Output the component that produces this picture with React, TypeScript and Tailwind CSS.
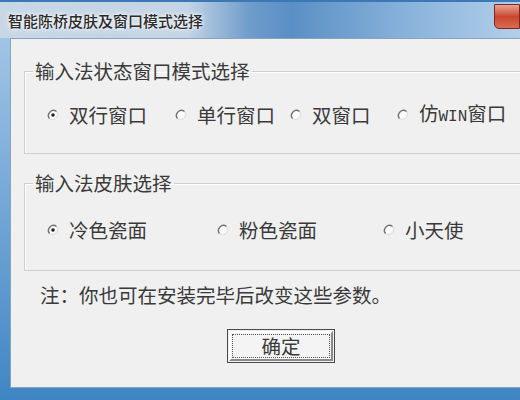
import React from "react";

const modes = [
  { label: "双行窗口", width: "w-[128px]", checked: true },
  { label: "单行窗口", width: "w-[115px]", checked: false },
  { label: "双窗口", width: "w-[107px]", checked: false },
  { label: "仿WIN窗口", width: "w-auto", checked: false },
];

const skins = [
  { label: "冷色瓷面", width: "w-[170px]", checked: true },
  { label: "粉色瓷面", width: "w-[166px]", checked: false },
  { label: "小天使", width: "w-auto", checked: false },
];

function Radio({ checked }: { checked: boolean }) {
  return (
    <svg width="12" height="12" viewBox="0 0 12 12" className="shrink-0">
      <circle cx="6" cy="6" r="5" fill="#fbfbfb" />
      {/* light lower-right half */}
      <path d="M9.5 2.5 A5 5 0 0 1 2.5 9.5" fill="none" stroke="#e2e2e2" strokeWidth="1.3" />
      {/* dark upper-left half */}
      <path d="M2.5 9.5 A5 5 0 0 1 9.5 2.5" fill="none" stroke="#707070" strokeWidth="1.4" />
      {checked && <circle cx="6" cy="6" r="1.8" fill="#222" />}
    </svg>
  );
}

function Label({ text }: { text: string }) {
  // the latin part of 仿WIN窗口 is drawn in a narrow fixed-width face
  if (text.includes("WIN")) {
    const [a, b] = text.split("WIN");
    return (
      <span>
        {a}
        <span className="font-['Liberation_Mono',monospace] text-[16px]">WIN</span>
        {b}
      </span>
    );
  }
  return <span>{text}</span>;
}

export default function App() {
  return (
    <div className="relative h-[400px] w-[520px] overflow-hidden border-t-[2px] border-[#3b78b5] bg-gradient-to-b from-[#a9cbe8] via-[#74a8d6] to-[#3f86c4] font-['Noto_Sans_CJK_SC',sans-serif] text-[#3a3a3a]">
      {/* title bar */}
      <div className="flex h-[36px] items-center bg-[linear-gradient(90deg,#c8d7e6_0%,#c3d4e5_36%,#6e9ccb_48%,#5a8fc5_56%,#8cb5dc_80%,#b2cfe9_100%)] pl-[8px]">
        <span className="text-[15px] font-medium leading-none text-[#2b2b2b] [text-shadow:0_0_6px_#fff,0_0_3px_#fff]">
          智能陈桥皮肤及窗口模式选择
        </span>
      </div>
      <div className="absolute right-0 top-[2px] h-[25px] w-[26px] rounded-bl-[5px] border border-[#7a2a20] bg-gradient-to-b from-[#e8a393] via-[#c9452f] to-[#d96b4f]" />

      {/* client area */}
      <div className="ml-[10px] flex h-[350px] flex-col border-y border-l border-[#8aa3bb] bg-[#f0f0f0] pl-[13px] text-[19.5px]">
        <fieldset className="mt-[19px] h-[96px] w-[520px] border border-[#cfcfcf] shadow-[inset_1px_1px_0_#fff]">
          <legend className="ml-[8px] px-[2px] leading-[26px]">输入法状态窗口模式选择</legend>
          <div className="flex items-center pl-[22px] pt-[16px] leading-[26px]">
            {modes.map((m) => (
              <div key={m.label} className={`flex items-center gap-[10px] ${m.width}`}>
                <Radio checked={m.checked} />
                <Label text={m.label} />
              </div>
            ))}
          </div>
        </fieldset>

        <fieldset className="mt-[16px] h-[101px] w-[520px] border border-[#cfcfcf] shadow-[inset_1px_1px_0_#fff]">
          <legend className="ml-[8px] px-[2px] leading-[26px]">输入法皮肤选择</legend>
          <div className="flex items-center pl-[22px] pt-[21px] leading-[26px]">
            {skins.map((s) => (
              <div key={s.label} className={`flex items-center gap-[10px] ${s.width}`}>
                <Radio checked={s.checked} />
                <Label text={s.label} />
              </div>
            ))}
          </div>
        </fieldset>

        <p className="ml-[16px] mt-[11px] leading-[26px]">注：你也可在安装完毕后改变这些参数。</p>

        <div className="ml-[203px] mt-[21px] h-[34px] w-[108px] border border-[#4a4a4a] p-[1px]">
          <div className="h-full w-full border-[2px] border-b-[#8a8a8a] border-l-[#ffffff] border-r-[#8a8a8a] border-t-[#ffffff] bg-[#f4f4f4] p-[1px]">
            <div className="flex h-full w-full items-center justify-center border border-dotted border-[#555] leading-none">
              确定
            </div>
          </div>
        </div>
      </div>
    </div>
  );
}
